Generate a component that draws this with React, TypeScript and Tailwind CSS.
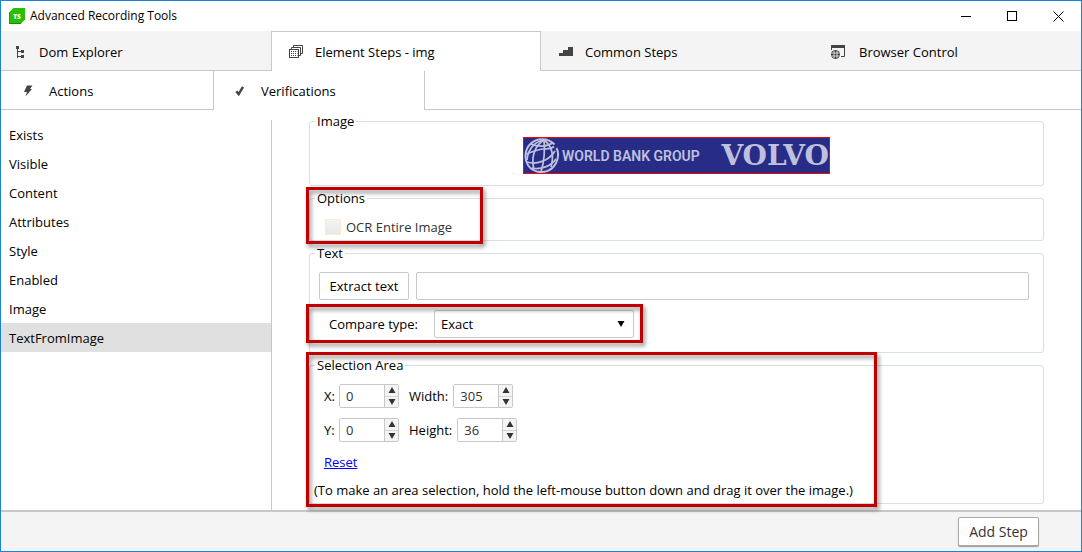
import type { ReactNode } from "react";

function AppLogo() {
  return (
    <svg width="16" height="16" viewBox="0 0 16 16" aria-hidden="true">
      <path d="M4.5 0H16V11.5L11.5 16H0V4.5Z" fill="#28c000" />
      <path d="M0 15H12.500L11.5 16H0Z" fill="#158a0c" />
      <path d="M0 4.500H1V16H0Z" fill="#1fa006" />
      <text
        x="8"
        y="10.500"
        textAnchor="middle"
        fontSize="6.500"
        fontWeight="800"
        fill="#fff"
        fontFamily="Open Sans, sans-serif"
      >
        TS
      </text>
    </svg>
  );
}

function TreeIcon() {
  return (
    <svg width="14" height="14" viewBox="0 0 14 14" fill="#444" aria-hidden="true">
      <rect x="3" y="1" width="3" height="3" />
      <rect x="4" y="3" width="1" height="10" />
      <rect x="4" y="6" width="5" height="1" />
      <rect x="4" y="11" width="5" height="1" />
      <rect x="8" y="5" width="3" height="3" />
      <rect x="8" y="10" width="3" height="3" />
    </svg>
  );
}

function StackIcon() {
  return (
    <svg width="14" height="14" viewBox="0 0 14 14" fill="none" stroke="#444" aria-hidden="true">
      <path d="M4.5 2V.5H13.5V8.5H12" />
      <path d="M2.5 4V2.5H11.5V10.5H10" />
      <rect x=".5" y="4.5" width="9" height="8" />
      <path d="M2 6.5H8.5M2 8.5H8.5M2 10.5H8.5" strokeDasharray="1 1" />
    </svg>
  );
}

function StairsIcon() {
  return (
    <svg width="14" height="14" viewBox="0 0 14 14" fill="#444" aria-hidden="true">
      <path d="M0 11V8H4V5H9V2H14V11Z" />
    </svg>
  );
}

function BrowserIcon() {
  return (
    <svg width="16" height="14" viewBox="0 0 16 14" fill="none" stroke="#444" aria-hidden="true">
      <path d="M0 0H14V3H0Z" fill="#444" stroke="none" />
      <path d="M13.5 2V11.5H10M.5 2V5" />
      <circle cx="4.5" cy="9.5" r="4.5" fill="#444" stroke="none" />
      <path d="M.5 8H8.5M.5 11H8.5M3 5.500V13.500M6 5.500V13.500" stroke="#f4f4f4" strokeWidth=".8" />
    </svg>
  );
}

function BoltIcon() {
  return (
    <svg width="10" height="12" viewBox="0 0 10 12" fill="#444" aria-hidden="true">
      <path d="M4 .5H9.500L7 4H9L2.500 11.500L4 7H1Z" />
    </svg>
  );
}

function CheckIcon() {
  return (
    <svg width="10" height="12" viewBox="0 0 10 12" fill="none" stroke="#444" strokeWidth="2.400" aria-hidden="true">
      <path d="M1.300 6.200L3.700 9.200L8 1.800" />
    </svg>
  );
}

function Globe() {
  return (
    <svg width="36" height="35" viewBox="0 0 36 35" fill="none" stroke="#bfc0de" strokeWidth="1.700" aria-hidden="true">
      <path d="M32.500 10C34.500 14 34.500 20 32 25C28 33 20 35 13 33.500C5 31.500 1 24.500 1.500 17C2 8 9 1.200 18 1.200C23 1.200 27.500 3 30.500 6.500" strokeWidth="2" />
      <path d="M7 6C14 9 23 9 28.500 5M2 16C9 14 14 11 19 11C24 11 27 11 30 8.500M3 24C12 27 25 23 31 13M8 30C17 32 27 28 32 21" />
      <path d="M20 2C10 8 7 20 10 32M20 2C21 12 20 24 17 34M20 2C28 8 30 18 27 29M20 2C12 3 4 10 3 22" />
    </svg>
  );
}

function Arrow({ up = false, className }: { up?: boolean; className?: string }) {
  return (
    <svg width="8" height="6" viewBox="0 0 8 6" fill="currentColor" className={className} aria-hidden="true">
      <path d={up ? "M4 0L7.500 6H.5Z" : "M.5 0H7.500L4 6Z"} />
    </svg>
  );
}

function Highlight({ className }: { className: string }) {
  return (
    <div
      aria-hidden="true"
      className={`pointer-events-none absolute border-[3px] border-[#c00000] drop-shadow-[2px_3px_2px_rgba(0,0,0,0.45)] ${className}`}
    />
  );
}

function Group({ title, className, children, mark }: { title: string; className: string; children: ReactNode; mark?: ReactNode }) {
  return (
    <div className="relative">
      <fieldset className="min-w-0 rounded-[3px] border border-[#d5dfe5]">
        <legend className="ml-[5px] px-0.5 leading-[18px]">{title}</legend>
        <div className={className}>{children}</div>
      </fieldset>
      {mark}
    </div>
  );
}

function Spinner({ id, label, value, labelClass = "" }: { id: string; label: string; value: number; labelClass?: string }) {
  return (
    <div className="flex items-center">
      <label htmlFor={id} className={labelClass}>
        {label}
      </label>
      <div className="flex h-6 w-[60px] overflow-hidden rounded-xs border border-[#c8c8c8]">
        <input
          id={id}
          type="number"
          defaultValue={value}
          className="w-11 min-w-0 bg-white pl-1.5 text-[#333] outline-none [appearance:textfield] [&::-webkit-inner-spin-button]:appearance-none"
        />
        <div className="flex w-3.5 flex-col border-l border-[#c8c8c8] bg-[#f4f4f4] text-[#333]">
          <button type="button" aria-label={`Increase ${label}`} className="flex flex-1 items-center justify-center border-b border-[#d4d4d4]">
            <Arrow up />
          </button>
          <button type="button" aria-label={`Decrease ${label}`} className="flex flex-1 items-center justify-center">
            <Arrow />
          </button>
        </div>
      </div>
    </div>
  );
}

const checks = ["Exists", "Visible", "Content", "Attributes", "Style", "Enabled", "Image", "TextFromImage"];

export default function App() {
  return (
    <div className="flex min-h-screen flex-col border border-[#1883d7] bg-white font-['Open_Sans','Noto_Sans',sans-serif] text-[13px] leading-5 text-black">
      <header className="flex h-[30px] items-center pl-2">
        <AppLogo />
        <h1 className="ml-[5px] flex-1 text-[12px]">Advanced Recording Tools</h1>
        <button type="button" aria-label="Minimize" className="flex h-full w-[46px] items-center justify-center">
          <svg width="11" height="11" stroke="#000" fill="none"><path d="M0 5.500H10" /></svg>
        </button>
        <button type="button" aria-label="Maximize" className="flex h-full w-[46px] items-center justify-center">
          <svg width="11" height="11" stroke="#000" fill="none"><rect x=".5" y=".5" width="9" height="9" /></svg>
        </button>
        <button type="button" aria-label="Close" className="flex h-full w-[46px] items-center justify-center">
          <svg width="11" height="11" stroke="#000" fill="none"><path d="M.5 .5L10.500 10.500M10.500 .5L.5 10.500" /></svg>
        </button>
      </header>

      <div role="tablist" aria-label="Tools" className="grid h-10 grid-cols-4 bg-[#f4f4f4]">
        <button type="button" role="tab" aria-selected="false" className="flex items-center gap-3 border-b border-[#c8c8c8] pt-0.5 pl-3">
          <TreeIcon />Dom Explorer
        </button>
        <button type="button" role="tab" aria-selected="true" className="flex items-center gap-3 border border-b-0 border-[#c8c8c8] bg-white pl-[17px]">
          <StackIcon />Element Steps - img
        </button>
        <button type="button" role="tab" aria-selected="false" className="flex items-center gap-3 border-b border-[#c8c8c8] pt-0.5 pl-[18px]">
          <StairsIcon />Common Steps
        </button>
        <button type="button" role="tab" aria-selected="false" className="flex items-center gap-3 border-b border-[#c8c8c8] pt-0.5 pl-5">
          <BrowserIcon />Browser Control
        </button>
      </div>

      <div role="tablist" aria-label="Step kinds" className="flex h-[39px]">
        <button type="button" role="tab" aria-selected="false" className="flex w-[213px] items-center gap-4 border-r border-b border-[#c8c8c8] pt-0.5 pl-[22px]">
          <BoltIcon />Actions
        </button>
        <button type="button" role="tab" aria-selected="true" className="flex w-[211px] items-center gap-4 border-r border-[#c8c8c8] pl-[21px]">
          <CheckIcon />Verifications
        </button>
        <div className="flex-1 border-b border-[#c8c8c8]" />
      </div>

      <div className="flex flex-1">
        <nav aria-label="Verifications" className="mt-2.5 w-[271px] shrink-0 border-r border-[#c8c8c8]">
          {checks.map((name) => (
            <button
              key={name}
              type="button"
              className={`block h-[29px] w-full pl-2 text-left ${name === "TextFromImage" ? "bg-[#e0e0e0]" : ""}`}
            >
              {name}
            </button>
          ))}
        </nav>

        <main className="flex min-w-0 flex-1 flex-col gap-[3px] px-[37px] pt-0.5 pb-1.5">
          <Group title="Image" className="h-[55px] pt-[7px]">
            <div className="mx-auto flex h-[37px] w-[307px] items-center overflow-hidden border border-[#f00] bg-[#272d86] whitespace-nowrap text-[#bfc0de]">
              <Globe />
              <span className="ml-0.5 font-['Roboto',sans-serif] text-[14px] font-semibold">WORLD BANK GROUP</span>
              <span className="ml-auto font-['DejaVu_Serif',serif] text-[28px] font-bold">VOLVO</span>
            </div>
          </Group>

          <Group title="Options" className="h-[33px] pt-2.5 pl-[15px]" mark={<Highlight className="-top-0.5 -left-[3px] h-[57px] w-[177px]" />}>
            <label className="flex w-fit items-center gap-[5px] text-[#333]">
              <input
                type="checkbox"
                className="h-4 w-4 appearance-none border border-[#fbecd0] bg-linear-to-b from-[#f4f4f4] to-[#e8e8e8]"
              />
              OCR Entire Image
            </label>
          </Group>

          <Group title="Text" className="h-[90px] pt-2.5 pr-3.5 pl-[9px]">
            <div className="flex gap-[7px]">
              <button type="button" className="h-7 w-[90px] rounded-xs border border-[#c8c8c8] bg-white">
                Extract text
              </button>
              <input
                type="text"
                aria-label="Extracted text"
                className="h-7 min-w-0 flex-1 rounded-xs border border-[#c8c8c8] px-1.5 outline-none"
              />
            </div>
            <div className="relative mt-2.5 flex items-center pl-2.5">
              <label htmlFor="compare" className="w-[105px]">Compare type:</label>
              <div className="relative w-[200px]">
                <select id="compare" className="block h-7 w-full appearance-none rounded-xs border border-[#c8c8c8] bg-white pl-1.5 outline-none">
                  <option>Exact</option>
                  <option>Contains</option>
                </select>
                <Arrow className="pointer-events-none absolute top-[11px] right-[9px]" />
              </div>
              <Highlight className="-top-1.5 -left-[13px] h-[39px] w-[337px]" />
            </div>
          </Group>

          <Group title="Selection Area" className="h-[129px] pt-2.5 pl-1" mark={<Highlight className="-top-1 -left-[3px] h-[155px] w-[571px]" />}>
            <div className="flex flex-col gap-2.5 pl-2.5">
              <div className="flex gap-2.5">
                <Spinner id="x" label="X:" value={0} labelClass="w-[15px]" />
                <Spinner id="width" label="Width:" value={305} labelClass="mr-[5px]" />
              </div>
              <div className="flex gap-2.5">
                <Spinner id="y" label="Y:" value={0} labelClass="w-[15px]" />
                <Spinner id="height" label="Height:" value={36} labelClass="mr-[5px]" />
              </div>
              <a href="#reset" className="w-fit text-[#00f] underline">Reset</a>
            </div>
            <p className="mt-2">(To make an area selection, hold the left-mouse button down and drag it over the image.)</p>
          </Group>
        </main>
      </div>

      <footer className="flex h-[41px] items-center justify-end border-t-2 border-[#c8c8c8] bg-[#f4f4f4] pr-[42px]">
        <button type="button" className="h-[29px] w-[81px] rounded-xs border border-[#ababab] bg-white text-[14px] text-[#333] shadow-[0_1px_1px_#999]">
          Add Step
        </button>
      </footer>
    </div>
  );
}
